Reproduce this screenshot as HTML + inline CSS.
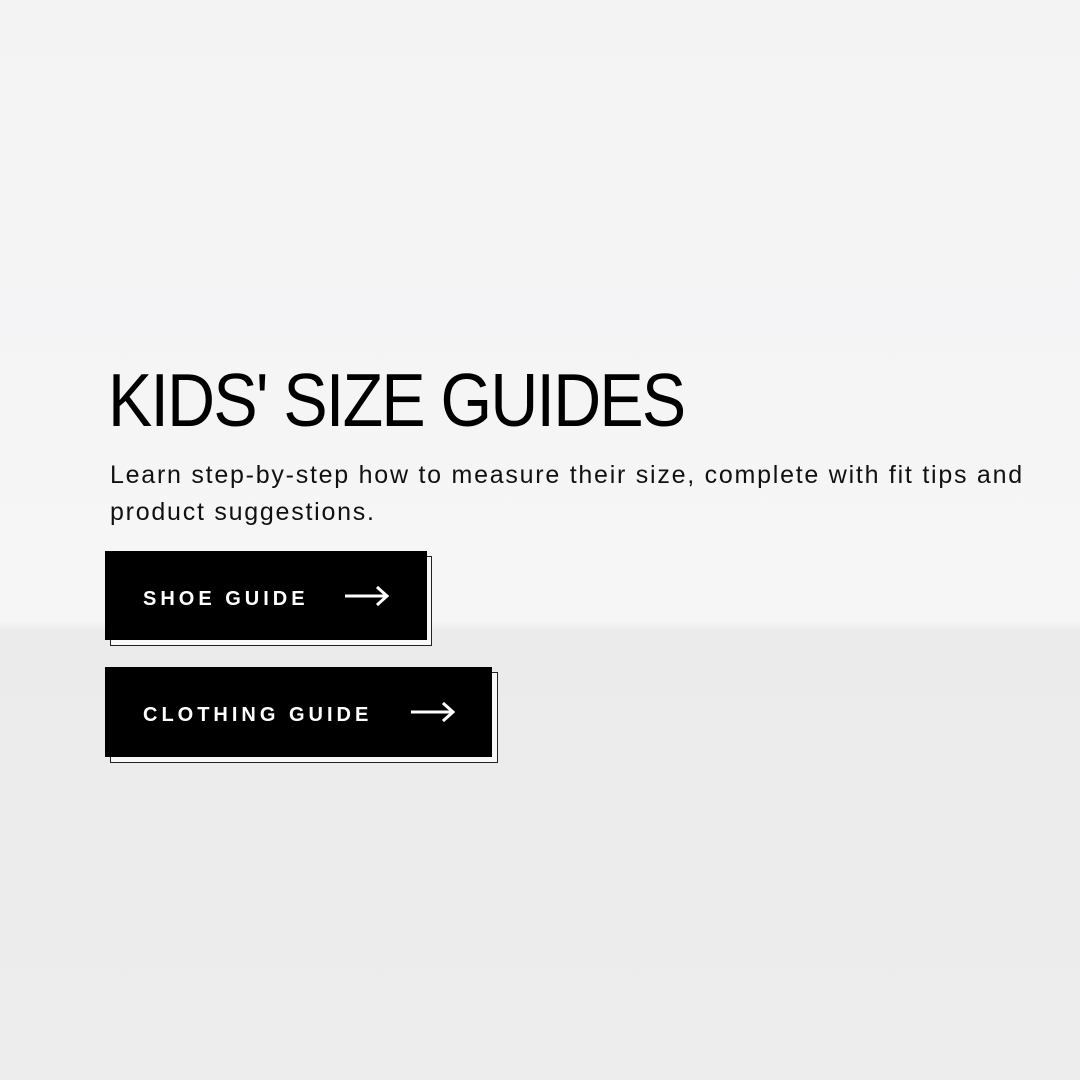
<!DOCTYPE html>
<html><head><meta charset="utf-8"><style>
html,body{margin:0;padding:0}
body{width:1080px;height:1080px;position:relative;overflow:hidden;font-family:"Liberation Sans",sans-serif;
background:linear-gradient(180deg,#f3f3f4 0px,#f6f6f7 620px,#ebebeb 632px,#ededed 1080px);}
h1{position:absolute;left:108px;top:355px;margin:0;font-size:75px;font-weight:400;letter-spacing:-2px;color:#000;line-height:90px;white-space:nowrap;transform:scaleX(0.885);transform-origin:left}
p{position:absolute;left:110px;top:457px;margin:0;font-size:25px;line-height:37px;color:#111;white-space:nowrap;letter-spacing:1.75px}
.btn{position:absolute;left:105px;background:#000;color:#fff;font-weight:700;font-size:20px;letter-spacing:4px;box-sizing:border-box;}
.sh{position:absolute;left:110px;border:1.5px solid #222;background:#f8f8f8;box-sizing:border-box}
.btn span{position:absolute;left:38px;top:37px;line-height:22px}
.btn svg{position:absolute;top:33px}
</style></head><body>
<h1>KIDS' SIZE GUIDES</h1>
<p>Learn step-by-step how to measure their size, complete with fit tips and<br>product suggestions.</p>
<div class="sh" style="top:556px;width:322px;height:90px"></div>
<div class="btn" style="top:551px;width:322px;height:89px"><span>SHOE GUIDE</span>
<svg style="left:240px" width="44" height="24" viewBox="0 0 44 24"><path d="M0 12H42M32 3L42 12L32 21" stroke="#fff" stroke-width="3" fill="none"/></svg></div>
<div class="sh" style="top:672px;width:388px;height:91px"></div>
<div class="btn" style="top:667px;width:387px;height:90px"><span>CLOTHING GUIDE</span>
<svg style="left:306px" width="44" height="24" viewBox="0 0 44 24"><path d="M0 12H42M32 3L42 12L32 21" stroke="#fff" stroke-width="3" fill="none"/></svg></div>
</body></html>
